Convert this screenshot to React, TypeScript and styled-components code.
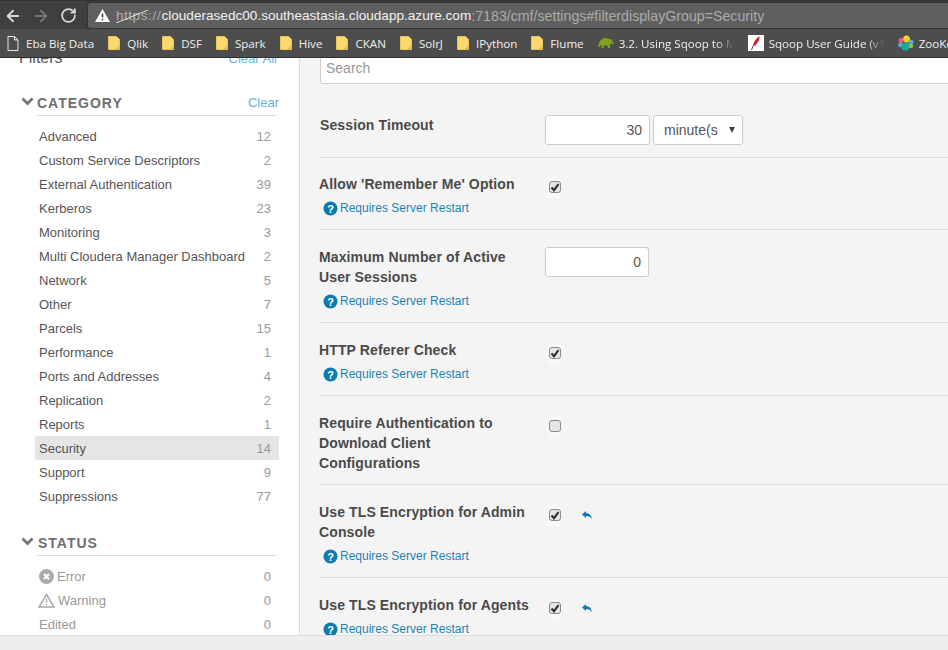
import { ArrowLeft, ArrowRight, RotateCw } from "lucide-react";
import styled, { createGlobalStyle } from "styled-components";

const GlobalStyle = createGlobalStyle`
  html, body {
    margin: 0;
    padding: 0;
    height: 650px;
    overflow: hidden;
    font-family: "Liberation Sans", Arial, sans-serif;
  }
`;

const categories: [string, number][] = [
  ["Advanced", 12],
  ["Custom Service Descriptors", 2],
  ["External Authentication", 39],
  ["Kerberos", 23],
  ["Monitoring", 3],
  ["Multi Cloudera Manager Dashboard", 2],
  ["Network", 5],
  ["Other", 7],
  ["Parcels", 15],
  ["Performance", 1],
  ["Ports and Addresses", 4],
  ["Replication", 2],
  ["Reports", 1],
  ["Security", 14],
  ["Support", 9],
  ["Suppressions", 77],
];

const bookmarks = ["Qlik", "DSF", "Spark", "Hive", "CKAN", "SolrJ", "IPython", "Flume"];

const FolderIcon = () => (
  <svg width="12" height="14" viewBox="0 0 12 14">
    <path d="M0.5 0.5h8l3 3v10h-11z" fill="#fcd96f" stroke="#e8c35a" />
    <path d="M8 13h3V10z" fill="#d9b04a" />
  </svg>
);

const PageIcon = () => (
  <svg width="12" height="15" viewBox="0 0 12 15">
    <path d="M1 .5h6.5l3.5 3.5v10.500H1z M7.500 .5V4H11" fill="none" stroke="#e8e8e8" />
  </svg>
);

const ElephantIcon = () => (
  <svg width="16" height="12" viewBox="0 0 16 12">
    <path
      d="M0 10 Q1 4 4 2 Q8 0 11 2 Q14 2 15 5 L16 7 L14 7 L13 6 L12 8 L12 11 L10 11 L9.500 8.500 L6 8.500 L5.500 11 L3.500 11 L3.500 8 Q2 8 1.500 10z"
      fill="#7fa321"
    />
  </svg>
);

const FeatherIcon = () => (
  <FeatherBox>
    <svg width="16" height="16" viewBox="0 0 16 16">
      <path d="M11.500 1 Q12 6 6.500 11 L5 11 Q6 5 11.500 1z" fill="#c8202f" />
      <path d="M5 11 L3.500 15" stroke="#8a1a4a" strokeWidth="1" />
    </svg>
  </FeatherBox>
);

const ZooIcon = () => (
  <svg width="16" height="16" viewBox="0 0 16 16">
    <circle cx="8.500" cy="4" r="3.500" fill="#f4d21f" />
    <circle cx="3" cy="5.500" r="2.500" fill="#ee5a8c" />
    <circle cx="13" cy="7" r="2.500" fill="#5aa9dc" />
    <circle cx="2.500" cy="10" r="2.300" fill="#4fb8d8" />
    <circle cx="7.500" cy="11.500" r="4" fill="#1fa79b" />
    <circle cx="13" cy="11" r="2.300" fill="#8cc63f" />
  </svg>
);

const ChevronIcon = () => (
  <ChevronSvg width="13" height="9" viewBox="0 0 13 9">
    <path d="M1.500 1.500 L6.500 6.500 L11.500 1.500" fill="none" stroke="#77777a" strokeWidth="2.800" />
  </ChevronSvg>
);

const ErrorIcon = () => (
  <svg width="15" height="15" viewBox="0 0 15 15">
    <circle cx="7.500" cy="7.500" r="7.500" fill="#aaa" />
    <path d="M5 5 L10 10 M10 5 L5 10" stroke="#fff" strokeWidth="2.200" />
  </svg>
);

const WarningIcon = () => (
  <WarningSvg width="17" height="15" viewBox="0 0 17 15">
    <path d="M8.500 1.500 L16 14 H1z" fill="none" stroke="#aaa" strokeWidth="1.500" />
    <path d="M8.500 5.500v4.500M8.500 11v1.500" stroke="#aaa" strokeWidth="1.300" />
  </WarningSvg>
);

const HelpIcon = () => (
  <svg width="15" height="15" viewBox="0 0 15 15">
    <circle cx="7.500" cy="7.500" r="7" fill="#0b7bb0" />
    <text x="7.500" y="11.500" textAnchor="middle" fontSize="11" fontWeight="700" fill="#fff" fontFamily="Liberation Sans">
      ?
    </text>
  </svg>
);

const ResetIcon = () => (
  <ResetSvg width="10" height="9" viewBox="0 0 10 9">
    <path d="M0 3.500 L4 0 V2 Q9 2 10 8 Q8 5 4 5 V7z" fill="#0b7bb0" />
  </ResetSvg>
);

const Restart = () => (
  <Message>
    <HelpIcon />
    <span>Requires Server Restart</span>
  </Message>
);

const Check = ({ checked = true }: { checked?: boolean }) => (
  <CheckCell>
    <CheckBox>
      {checked && (
        <svg width="10" height="9" viewBox="0 0 10 9">
          <path d="M1.500 4.500 L4 7.200 L8.500 1.200" fill="none" stroke="#333" strokeWidth="2.200" />
        </svg>
      )}
    </CheckBox>
  </CheckCell>
);

const App = () => (
  <>
    <GlobalStyle />
    <Page>
      <Toolbar>
        <NavButtons>
          <ArrowLeft size={18} color="#d8d8d8" strokeWidth={2.500} />
          <ArrowRight size={18} color="#757575" strokeWidth={2.500} />
          <RotateCw size={17} color="#d8d8d8" strokeWidth={2.500} />
        </NavButtons>
        <AddressBar>
          <AlertMark>
            <svg width="15" height="13" viewBox="0 0 15 13">
              <path d="M7.500 0 L15 13 H0z" fill="#fff" />
              <path d="M7.500 4.500v4M7.500 9.800v1.500" stroke="#444" strokeWidth="1.600" />
            </svg>
          </AlertMark>
          <Scheme>https</Scheme>
          <SchemeSep>://</SchemeSep>
          <Host>clouderasedc00.southeastasia.cloudapp.azure.com</Host>
          <UrlPath>:7183/cmf/settings#filterdisplayGroup=Security</UrlPath>
        </AddressBar>
      </Toolbar>
      <BookmarkBar>
        <Bookmark>
          <PageIcon />
          <span>Eba Big Data</span>
        </Bookmark>
        {bookmarks.map((name) => (
          <Bookmark key={name}>
            <FolderIcon />
            <span>{name}</span>
          </Bookmark>
        ))}
        <SiteBookmark>
          <ElephantIcon />
          <Faded $width={115}>3.2. Using Sqoop to Move</Faded>
        </SiteBookmark>
        <SiteBookmark>
          <FeatherIcon />
          <Faded $width={115}>Sqoop User Guide (v1.4</Faded>
        </SiteBookmark>
        <SiteBookmark>
          <ZooIcon />
          <span>ZooKeeper</span>
        </SiteBookmark>
      </BookmarkBar>
      <Content>
        <Sidebar>
          <FilterHead>
            <FilterTitle>Filters</FilterTitle>
            <ClearAll>Clear All</ClearAll>
          </FilterHead>
          <SectionHead>
            <ChevronIcon />
            <SectionTitle>
              <SectionName>CATEGORY</SectionName>
              <ClearLink>Clear</ClearLink>
            </SectionTitle>
          </SectionHead>
          <List>
            {categories.map(([name, count]) => (
              <Item key={name} $active={name === "Security"}>
                <span>{name}</span>
                <Count>{count}</Count>
              </Item>
            ))}
          </List>
          <SectionHead>
            <ChevronIcon />
            <SectionTitle>
              <StatusName>STATUS</StatusName>
            </SectionTitle>
          </SectionHead>
          <List>
            <StatusItem>
              <StatusLabel>
                <ErrorIcon />
                Error
              </StatusLabel>
              <span>0</span>
            </StatusItem>
            <StatusItem>
              <StatusLabel>
                <WarningIcon />
                Warning
              </StatusLabel>
              <span>0</span>
            </StatusItem>
            <StatusItem>
              <span>Edited</span>
              <span>0</span>
            </StatusItem>
          </List>
        </Sidebar>
        <Main>
          <SearchInput>Search</SearchInput>
          <Row>
            <SessionLabel>Session Timeout</SessionLabel>
            <Controls>
              <NumberBox $width={105}>30</NumberBox>
              <SelectBox>
                minute(s
                <Caret />
              </SelectBox>
            </Controls>
          </Row>
          <Row $tight>
            <RowText>
              <Label>Allow 'Remember Me' Option</Label>
              <Restart />
            </RowText>
            <Check />
          </Row>
          <Row>
            <RowText>
              <Label>
                Maximum Number of Active
                <br />
                User Sessions
              </Label>
              <Restart />
            </RowText>
            <NumberBox $width={104}>0</NumberBox>
          </Row>
          <Row>
            <RowText>
              <Label>HTTP Referer Check</Label>
              <Restart />
            </RowText>
            <Check />
          </Row>
          <Row>
            <RowText>
              <Label>
                Require Authentication to
                <br />
                Download Client
                <br />
                Configurations
              </Label>
            </RowText>
            <Check checked={false} />
          </Row>
          <Row>
            <RowText>
              <Label>
                Use TLS Encryption for Admin
                <br />
                Console
              </Label>
              <Restart />
            </RowText>
            <Check />
            <ResetIcon />
          </Row>
          <Row>
            <RowText>
              <Label>Use TLS Encryption for Agents</Label>
              <Restart />
            </RowText>
            <Check />
            <ResetIcon />
          </Row>
        </Main>
      </Content>
      <Footer />
    </Page>
  </>
);

const Page = styled.div`
  width: 948px;
  height: 650px;
  display: flex;
  flex-direction: column;
  overflow: hidden;
  background: #fff;
`;

const Toolbar = styled.div`
  height: 29px;
  flex: none;
  box-sizing: border-box;
  padding-top: 1px;
  display: flex;
  align-items: center;
  background: #3f3f3f;
  border-top: 1px solid #333;
`;

const NavButtons = styled.div`
  width: 87px;
  flex: none;
  box-sizing: border-box;
  padding: 0 10px 0 4px;
  display: flex;
  justify-content: space-between;
  align-items: center;
`;

const AddressBar = styled.div`
  flex: 1;
  height: 27px;
  box-sizing: border-box;
  padding-left: 7px;
  display: flex;
  align-items: center;
  background: #5f5f5f;
  border: 1px solid #333;
  border-right: none;
  border-radius: 3px 0 0 3px;
  font-size: 13.600px;
  white-space: nowrap;
`;

const AlertMark = styled.span`
  display: flex;
  margin-right: 6px;
`;

const Scheme = styled.span`
  position: relative;
  color: #b0b0b0;
  letter-spacing: 0.500px;
  &::after {
    content: "";
    position: absolute;
    left: -1px;
    right: -1px;
    top: 8px;
    border-top: 1px solid #eee;
    transform: rotate(-22deg);
  }
`;

const SchemeSep = styled.span`
  color: #aaa;
  letter-spacing: 0.700px;
`;

const Host = styled.span`
  color: #f2f2f2;
`;

const UrlPath = styled.span`
  color: #aaa;
  font-size: 14.200px;
`;

const BookmarkBar = styled.div`
  height: 29px;
  flex: none;
  box-sizing: border-box;
  padding-left: 7px;
  display: flex;
  align-items: center;
  gap: 14px;
  background: #4d4d4d;
  border-bottom: 1px solid #2e2e2e;
  overflow: hidden;
  white-space: nowrap;
  font-family: "Open Sans", sans-serif;
  font-size: 11.600px;
  color: #efefef;
`;

const Bookmark = styled.div`
  display: flex;
  align-items: center;
  gap: 7px;
  flex: none;
`;

const SiteBookmark = styled(Bookmark)`
  gap: 5px;
`;

const Faded = styled.span<{ $width: number }>`
  width: ${(p) => p.$width}px;
  overflow: hidden;
  -webkit-mask-image: linear-gradient(to right, #000 85%, transparent);
  mask-image: linear-gradient(to right, #000 85%, transparent);
`;

const FeatherBox = styled.span`
  display: flex;
  background: #fff;
`;

const Content = styled.div`
  flex: 1;
  min-height: 0;
  display: flex;
  overflow: hidden;
`;

const Sidebar = styled.aside`
  width: 300px;
  flex: none;
  box-sizing: border-box;
  padding: 0 22px 0 21px;
  border-right: 1px solid #ddd;
  font-size: 13px;
  color: #555;
`;

const FilterHead = styled.div`
  margin-top: -10px;
  height: 20px;
  display: flex;
  justify-content: space-between;
  align-items: center;
`;

const FilterTitle = styled.span`
  font-size: 16px;
  color: #555;
  margin-left: -2px;
`;

const ClearAll = styled.span`
  font-size: 13px;
  color: #5db5e5;
`;

const SectionHead = styled.div`
  margin-top: 24px;
  display: flex;
  align-items: flex-start;
  gap: 3px;
`;

const ChevronSvg = styled.svg`
  flex: none;
  margin-top: 5px;
`;

const SectionTitle = styled.div`
  flex: 1;
  height: 24px;
  box-sizing: border-box;
  display: flex;
  justify-content: space-between;
  align-items: center;
  border-bottom: 1px solid #ddd;
  padding-bottom: 2px;
`;

const SectionName = styled.span`
  font-size: 14px;
  font-weight: 700;
  letter-spacing: 1px;
  color: #6e6e72;
`;

const StatusName = styled(SectionName)`
  margin-left: 1px;
`;

const ClearLink = styled.span`
  font-size: 13px;
  color: #5db5e5;
  margin-right: -2px;
`;

const List = styled.div`
  margin: 0 -2px 0 14px;
  padding-top: 8px;
  display: flex;
  flex-direction: column;
`;

const Item = styled.div<{ $active?: boolean }>`
  height: 24px;
  box-sizing: border-box;
  padding: 0 8px 0 4px;
  display: flex;
  justify-content: space-between;
  align-items: center;
  font-size: 13px;
  color: #555;
  background: ${(p) => (p.$active ? "#e5e5e5" : "transparent")};
`;

const Count = styled.span`
  color: #999;
`;

const StatusItem = styled(Item)`
  color: #999;
`;

const StatusLabel = styled.span`
  display: flex;
  align-items: center;
  gap: 3px;
`;

const WarningSvg = styled.svg`
  margin-left: -1px;
`;

const Main = styled.main`
  flex: 1;
  min-width: 0;
  box-sizing: border-box;
  padding-left: 19px;
  background: #f4f4f4;
  overflow: hidden;
`;

const SearchInput = styled.div`
  margin: -8px -10px 0 1px;
  height: 34px;
  box-sizing: border-box;
  padding: 1px 0 0 5px;
  display: flex;
  align-items: center;
  background: #fff;
  border: 1px solid #ccc;
  border-radius: 3px;
  font-size: 14px;
  color: #999;
`;

const Row = styled.div<{ $tight?: boolean }>`
  display: flex;
  align-items: flex-start;
  padding: ${(p) => (p.$tight ? "16px" : "17px")} 0 11px;
  border-bottom: 1px solid #ddd;
`;

const RowText = styled.div`
  width: 226px;
  flex: none;
`;

const Label = styled.div`
  font-size: 14px;
  font-weight: 700;
  line-height: 20px;
  letter-spacing: 0.120px;
  color: #4a4a4a;
`;

const SessionLabel = styled(Label)`
  width: 225px;
  flex: none;
  padding-left: 1px;
  padding-top: 14px;
`;

const Controls = styled.div`
  display: flex;
  gap: 3px;
  padding: 14px 0 1px;
`;

const Message = styled.div`
  margin: 4px 0 0 4px;
  height: 20px;
  display: flex;
  align-items: center;
  gap: 2px;
  font-size: 12px;
  color: #1d83b5;
`;

const NumberBox = styled.div<{ $width: number }>`
  width: ${(p) => p.$width}px;
  height: 30px;
  box-sizing: border-box;
  padding-right: 7px;
  display: flex;
  justify-content: flex-end;
  align-items: center;
  background: #fff;
  border: 1px solid #ccc;
  border-radius: 3px;
  font-size: 14px;
  color: #555;
`;

const SelectBox = styled.div`
  width: 90px;
  height: 30px;
  box-sizing: border-box;
  padding: 0 7px 0 10px;
  display: flex;
  justify-content: space-between;
  align-items: center;
  background: #fff;
  border: 1px solid #ccc;
  border-radius: 3px;
  font-size: 14px;
  color: #555;
`;

const Caret = styled.span`
  width: 0;
  height: 0;
  border-left: 3px solid transparent;
  border-right: 3px solid transparent;
  border-top: 6px solid #444;
`;

const CheckCell = styled.div`
  width: 13px;
  height: 20px;
  box-sizing: border-box;
  margin: 4px 0 0 3px;
  padding-bottom: 2px;
  display: flex;
  align-items: center;
  justify-content: center;
  background: #f8f8f8;
`;

const CheckBox = styled.span`
  width: 12px;
  height: 12px;
  box-sizing: border-box;
  display: flex;
  align-items: center;
  justify-content: center;
  background: #e6e6e6;
  border: 1px solid #8a8a8a;
  border-radius: 3px;
`;

const ResetSvg = styled.svg`
  margin: 9px 0 0 21px;
`;

const Footer = styled.div`
  height: 15px;
  flex: none;
  box-sizing: border-box;
  background: #eee;
  border-top: 1px solid #ddd;
`;

export default App;
